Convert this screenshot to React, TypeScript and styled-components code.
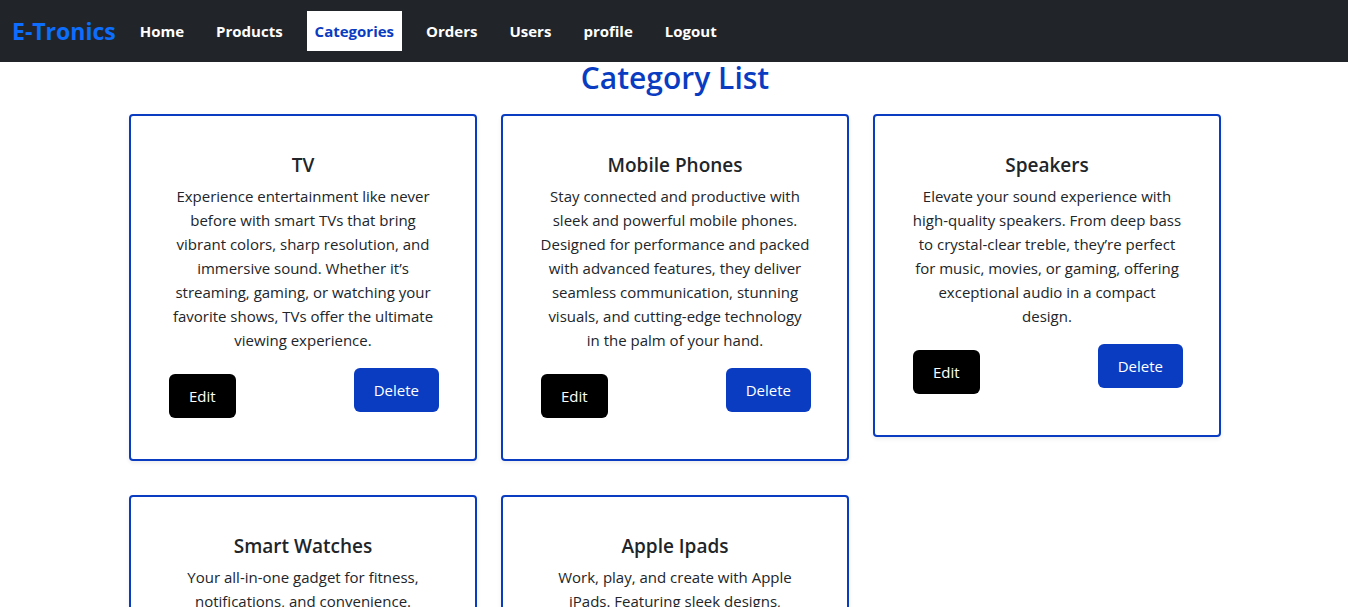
import React from "react";
import styled, { createGlobalStyle } from "styled-components";

const GlobalStyle = createGlobalStyle`
  *, *::before, *::after { box-sizing: border-box; }
  body {
    margin: 0;
    background: #fff;
    color: #212529;
    font-family: "Segoe UI", "Open Sans", "Noto Sans", sans-serif;
    font-size: 15px;
    line-height: 24px;
  }
`;

const Navbar = styled.nav`
  display: flex;
  align-items: center;
  min-height: 62px;
  padding: 0 12px;
  background: #212529;
`;

const Brand = styled.a`
  margin-right: 8px;
  color: #0d6efd;
  font-size: 23px;
  font-weight: 700;
  line-height: 36px;
  text-decoration: none;
`;

const NavList = styled.ul`
  display: flex;
  margin: 0;
  padding: 0;
  list-style: none;
`;

const NavItem = styled.li`
  padding: 0 8px;
`;

const NavLink = styled.a<{ $active?: boolean }>`
  display: block;
  padding: 8px;
  background: ${(p) => (p.$active ? "#fff" : "transparent")};
  color: ${(p) => (p.$active ? "#0a3cc2" : "#fff")};
  font-weight: 700;
  text-decoration: none;
`;

const Main = styled.main`
  max-width: 1118px;
  margin: 0 auto;
  padding: 0 12px 0 14px;
`;

const PageTitle = styled.h1`
  margin: 0 0 20px;
  color: #0a3cc2;
  font-size: 30px;
  font-weight: 600;
  line-height: 32px;
  text-align: center;
`;

const CardGrid = styled.div`
  display: grid;
  grid-template-columns: repeat(3, minmax(0, 1fr));
  align-items: start;
  gap: 34px 24px;
`;

const Card = styled.article`
  padding: 36px;
  border: 2px solid #0a3cc2;
  border-radius: 4px;
  box-shadow: 0 2px 4px rgba(0, 0, 0, 0.075);
  text-align: center;
`;

const CardTitle = styled.h2`
  margin: 0 0 6px;
  font-size: 19px;
  font-weight: 600;
  line-height: 26px;
`;

const CardText = styled.p`
  margin: 0 0 16px;
  padding: 0 1px;
`;

const Actions = styled.div`
  display: flex;
  justify-content: space-between;
  align-items: flex-start;
  padding-bottom: 5px;
`;

const Button = styled.button`
  height: 44px;
  padding: 0 20px;
  border: 0;
  border-radius: 6px;
  color: #fff;
  font: inherit;
  cursor: pointer;
`;

const EditButton = styled(Button)`
  margin: 6px 0 0 2px;
  background: #000;
`;

const DeleteButton = styled(Button)`
  background: #0a3cc2;
`;

const links = ["Home", "Products", "Categories", "Orders", "Users", "profile", "Logout"];

const categories = [
  {
    name: "TV",
    text: "Experience entertainment like never before with smart TVs that bring vibrant colors, sharp resolution, and immersive sound. Whether it’s streaming, gaming, or watching your favorite shows, TVs offer the ultimate viewing experience.",
  },
  {
    name: "Mobile Phones",
    text: "Stay connected and productive with sleek and powerful mobile phones. Designed for performance and packed with advanced features, they deliver seamless communication, stunning visuals, and cutting-edge technology in\u00a0the palm of your hand.",
  },
  {
    name: "Speakers",
    text: "Elevate your sound experience with high-quality speakers. From deep bass to crystal-clear treble, they’re perfect for music, movies, or gaming, offering exceptional audio in a compact design.",
  },
  {
    name: "Smart Watches",
    text: "Your all-in-one gadget for fitness, notifications, and convenience.",
  },
  {
    name: "Apple Ipads",
    text: "Work, play, and create with Apple iPads. Featuring sleek designs,",
  },
];

export default function App() {
  return (
    <>
      <GlobalStyle />
      <Navbar>
        <Brand href="#">E-Tronics</Brand>
        <NavList>
          {links.map((label) => (
            <NavItem key={label}>
              <NavLink href="#" $active={label === "Categories"}>
                {label}
              </NavLink>
            </NavItem>
          ))}
        </NavList>
      </Navbar>
      <Main>
        <PageTitle>Category List</PageTitle>
        <CardGrid>
          {categories.map((category) => (
            <Card key={category.name}>
              <CardTitle>{category.name}</CardTitle>
              <CardText>{category.text}</CardText>
              <Actions>
                <EditButton type="button">Edit</EditButton>
                <DeleteButton type="button">Delete</DeleteButton>
              </Actions>
            </Card>
          ))}
        </CardGrid>
      </Main>
    </>
  );
}
